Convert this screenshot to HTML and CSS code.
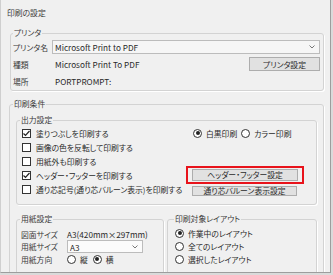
FILE: index.html
```html
<!DOCTYPE html>
<html lang="ja">
<head>
  <meta charset="UTF-8" />
  <title>印刷の設定</title>
  <link rel="stylesheet" href="styles.css">
</head>
<body>

  <div class="dialog">
    <div class="title">印刷の設定</div>

    <!-- Printer -->
    <fieldset class="group printer">
      <legend>プリンタ</legend>
      <div class="printer-grid">
        <span class="label">プリンタ名</span>
        <div class="combo">
          <span class="latin">Microsoft Print to PDF</span>
          <svg class="chevron" width="6" height="4" viewBox="0 0 6 4"><polyline points="0.5,0.5 3,3 5.5,0.5" fill="none" stroke="#777" stroke-width="1"/></svg>
        </div>
        <span class="label">種類</span>
        <div class="value-row">
          <span class="value latin">Microsoft Print To PDF</span>
          <button class="btn btn-printer">プリンタ設定</button>
        </div>
        <span class="label">場所</span>
        <span class="value latin">PORTPROMPT:</span>
      </div>
    </fieldset>

    <!-- Print conditions -->
    <fieldset class="group conditions">
      <legend>印刷条件</legend>

      <fieldset class="group output">
        <legend>出力設定</legend>
        <div class="output-grid">
          <label class="check"><span class="box checked"><svg width="9" height="9" viewBox="0 0 9 9"><polyline points="1.5,4.5 3.5,6.5 7.5,2" fill="none" stroke="#222" stroke-width="1.2"/></svg></span>塗りつぶしを印刷する</label>
          <div class="color-mode">
            <label class="radio"><span class="dot on"></span>白黒印刷</label>
            <label class="radio"><span class="dot"></span>カラー印刷</label>
          </div>

          <label class="check"><span class="box"></span>画像の色を反転して印刷する</label>
          <div></div>

          <label class="check"><span class="box"></span>用紙外も印刷する</label>
          <div></div>

          <label class="check"><span class="box checked"><svg width="9" height="9" viewBox="0 0 9 9"><polyline points="1.5,4.5 3.5,6.5 7.5,2" fill="none" stroke="#222" stroke-width="1.2"/></svg></span>ヘッダー・フッターを印刷する</label>
          <div class="highlight"><button class="btn btn-header">ヘッダー・フッター設定</button></div>

          <label class="check"><span class="box"></span>通り芯記号(通り芯バルーン表示)を印刷する</label>
          <div><button class="btn btn-balloon">通り芯バルーン表示設定</button></div>
        </div>
      </fieldset>

      <div class="sub-row">
        <fieldset class="group paper">
          <legend>用紙設定</legend>
          <div class="paper-grid">
            <span class="label">図面サイズ</span>
            <span class="value latin">A3(420mm×297mm)</span>
            <span class="label">用紙サイズ</span>
            <div class="combo combo-small">
              <span class="latin">A3</span>
              <svg class="chevron" width="6" height="4" viewBox="0 0 6 4"><polyline points="0.5,0.5 3,3 5.5,0.5" fill="none" stroke="#777" stroke-width="1"/></svg>
            </div>
            <span class="label">用紙方向</span>
            <div class="orient">
              <label class="radio"><span class="dot"></span>縦</label>
              <label class="radio"><span class="dot on"></span>横</label>
            </div>
          </div>
        </fieldset>

        <fieldset class="group layout">
          <legend>印刷対象レイアウト</legend>
          <div class="layout-list">
            <label class="radio"><span class="dot on"></span>作業中のレイアウト</label>
            <label class="radio"><span class="dot"></span>全てのレイアウト</label>
            <label class="radio"><span class="dot"></span>選択したレイアウト</label>
          </div>
        </fieldset>
      </div>
    </fieldset>
  </div>

</body>
</html>
```

FILE: styles.css
```css
body {
  margin: 0;
  background: #dadada;
  font-family: "Noto Sans CJK JP", "Noto Sans", sans-serif;
  font-size: 7.8px;
  font-feature-settings: "palt" 1;
  color: #2a2a2a;
}

.latin {
  font-size: 8.2px;
}

.dialog {
  width: 329px;
  height: 272px;
  overflow: hidden;
  background: #f0f0f0;
  border-left: 1px solid #cfcfcf;
  border-right: 1px solid #9d9d9d;
  border-bottom: 1px solid #9d9d9d;
}

.title {
  padding: 7px 0 0 6px;
  line-height: 12px;
  color: #3a3a3a;
}

/* group boxes */
.group {
  margin: 0;
  padding: 0;
  min-width: 0;
  border: 1px solid #d3d3d3;
  border-radius: 3px;
  box-shadow: 1px 1px 0 #fff;
}

.group legend {
  margin-left: 3px;
  padding: 0 1px;
  line-height: 10px;
  color: #3a3a3a;
}

.printer {
  margin: 9px 6px 0 9px;
}

.printer legend {
  margin-left: 2px;
}

.printer-grid {
  display: grid;
  grid-template-columns: 39px 1fr;
  grid-template-rows: 14px 14px 14px;
  row-gap: 3px;
  align-items: center;
  padding: 2px 3px 2px 2px;
}

.label {
  color: #3a3a3a;
  white-space: nowrap;
}

.value {
  padding-left: 3px;
  white-space: nowrap;
}

.combo {
  height: 14px;
  box-sizing: border-box;
  display: flex;
  align-items: center;
  justify-content: space-between;
  padding: 0 4px 0 2px;
  background: #f6f6f6;
  border: 1px solid #bcbcbc;
}

.combo-small {
  width: 76px;
  height: 13px;
  background: #fbfbfb;
}

.value-row {
  display: flex;
  justify-content: space-between;
  align-items: center;
}

.btn {
  margin: 0;
  padding: 0;
  font: inherit;
  color: #2a2a2a;
  background: #e1e1e1;
  border: 1px solid #adadad;
  white-space: nowrap;
}

.btn-printer {
  width: 71px;
  height: 14px;
}

.conditions {
  margin: 8px 6px 0 8px;
}

.output {
  margin: 6px 6px 0 6px;
}

.output-grid {
  display: grid;
  grid-template-columns: 1fr 118px;
  grid-auto-rows: 14px;
  align-items: center;
  padding: 1px 12px 8px 5px;
}

.check, .radio {
  display: flex;
  align-items: center;
  white-space: nowrap;
}

.check {
  gap: 5px;
}

.box {
  width: 9px;
  height: 9px;
  box-sizing: border-box;
  border: 1px solid #333;
  background: #fff;
  display: flex;
}

.box svg {
  margin: -1px;
}

.radio {
  gap: 4px;
}

.dot {
  width: 9px;
  height: 9px;
  box-sizing: border-box;
  border: 1px solid #333;
  border-radius: 50%;
  background: #fff;
  display: flex;
  align-items: center;
  justify-content: center;
}

.dot.on::after {
  content: "";
  width: 4px;
  height: 4px;
  border-radius: 50%;
  background: #222;
}

.color-mode {
  display: flex;
  gap: 4px;
  padding-left: 7px;
}

.highlight {
  margin: -2px 0;
  padding: 1px 4px;
  border: 2px solid #e8131b;
}

.btn-header {
  display: block;
  width: 100%;
  height: 12px;
  line-height: 10px;
}

.btn-balloon {
  display: block;
  width: 105px;
  height: 10px;
  line-height: 8px;
  margin: 4px 0 0 6px;
  overflow: hidden;
}

.sub-row {
  display: grid;
  grid-template-columns: 148px 1fr;
  gap: 3px;
  margin: 9px 6px 0 6px;
}

.paper-grid {
  display: grid;
  grid-template-columns: 46px 76px;
  grid-template-rows: 12px 13px 12px 20px;
  align-items: center;
  padding: 4px 0 0 4px;
}

.paper-grid .value {
  padding-left: 0;
}

.orient {
  display: flex;
  gap: 5px;
}

.layout legend {
  margin-left: 6px;
}

.layout-list {
  display: grid;
  grid-auto-rows: 12px;
  row-gap: 1px;
  align-items: center;
  padding: 3px 0 20px 7px;
}
```
